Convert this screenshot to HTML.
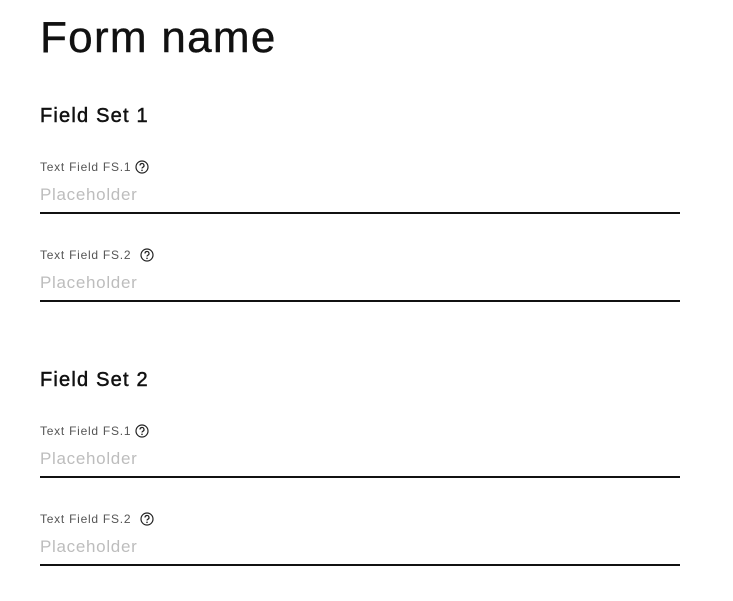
<!DOCTYPE html>
<html><head><meta charset="utf-8"><style>
body{margin:0;width:733px;height:601px;background:#fff;position:relative;overflow:hidden;font-family:"Liberation Sans",sans-serif;color:#111}
.a{position:absolute;left:40px;line-height:1;white-space:nowrap}
.t{font-size:44px;letter-spacing:1.3px;-webkit-text-stroke:0.4px #111}
.h{font-size:20px;letter-spacing:1.2px;-webkit-text-stroke:0.5px #111}
.l{font-size:12px;color:#555;letter-spacing:0.75px}
.p{font-size:17px;color:#bdbdbd;letter-spacing:0.7px}
.ln{position:absolute;left:40px;width:640px;height:2px;background:#111}
svg{position:absolute}
</style></head><body>
<div class="a t" style="top:16px">Form name</div>
<div class="a h" style="top:106px">Field Set 1</div>

<div class="a l" style="top:161px">Text Field FS.1</div>
<svg style="left:135px;top:160px" width="14" height="14" viewBox="0 0 14 14"><circle cx="7" cy="7" r="6" fill="none" stroke="#222" stroke-width="1.2"/><path d="M5 5.5a2 2 0 1 1 2.8 1.8c-.6.3-.8.6-.8 1.2" fill="none" stroke="#222" stroke-width="1.2"/><circle cx="7" cy="10.3" r=".8" fill="#222"/></svg>
<div class="a p" style="top:186px">Placeholder</div>
<div class="ln" style="top:212px"></div>

<div class="a l" style="top:249px">Text Field FS.2</div>
<svg style="left:140px;top:248px" width="14" height="14" viewBox="0 0 14 14"><circle cx="7" cy="7" r="6" fill="none" stroke="#222" stroke-width="1.2"/><path d="M5 5.5a2 2 0 1 1 2.8 1.8c-.6.3-.8.6-.8 1.2" fill="none" stroke="#222" stroke-width="1.2"/><circle cx="7" cy="10.3" r=".8" fill="#222"/></svg>
<div class="a p" style="top:274px">Placeholder</div>
<div class="ln" style="top:300px"></div>

<div class="a h" style="top:370px">Field Set 2</div>

<div class="a l" style="top:425px">Text Field FS.1</div>
<svg style="left:135px;top:424px" width="14" height="14" viewBox="0 0 14 14"><circle cx="7" cy="7" r="6" fill="none" stroke="#222" stroke-width="1.2"/><path d="M5 5.5a2 2 0 1 1 2.8 1.8c-.6.3-.8.6-.8 1.2" fill="none" stroke="#222" stroke-width="1.2"/><circle cx="7" cy="10.3" r=".8" fill="#222"/></svg>
<div class="a p" style="top:450px">Placeholder</div>
<div class="ln" style="top:476px"></div>

<div class="a l" style="top:513px">Text Field FS.2</div>
<svg style="left:140px;top:512px" width="14" height="14" viewBox="0 0 14 14"><circle cx="7" cy="7" r="6" fill="none" stroke="#222" stroke-width="1.2"/><path d="M5 5.5a2 2 0 1 1 2.8 1.8c-.6.3-.8.6-.8 1.2" fill="none" stroke="#222" stroke-width="1.2"/><circle cx="7" cy="10.3" r=".8" fill="#222"/></svg>
<div class="a p" style="top:538px">Placeholder</div>
<div class="ln" style="top:564px"></div>
</body></html>
